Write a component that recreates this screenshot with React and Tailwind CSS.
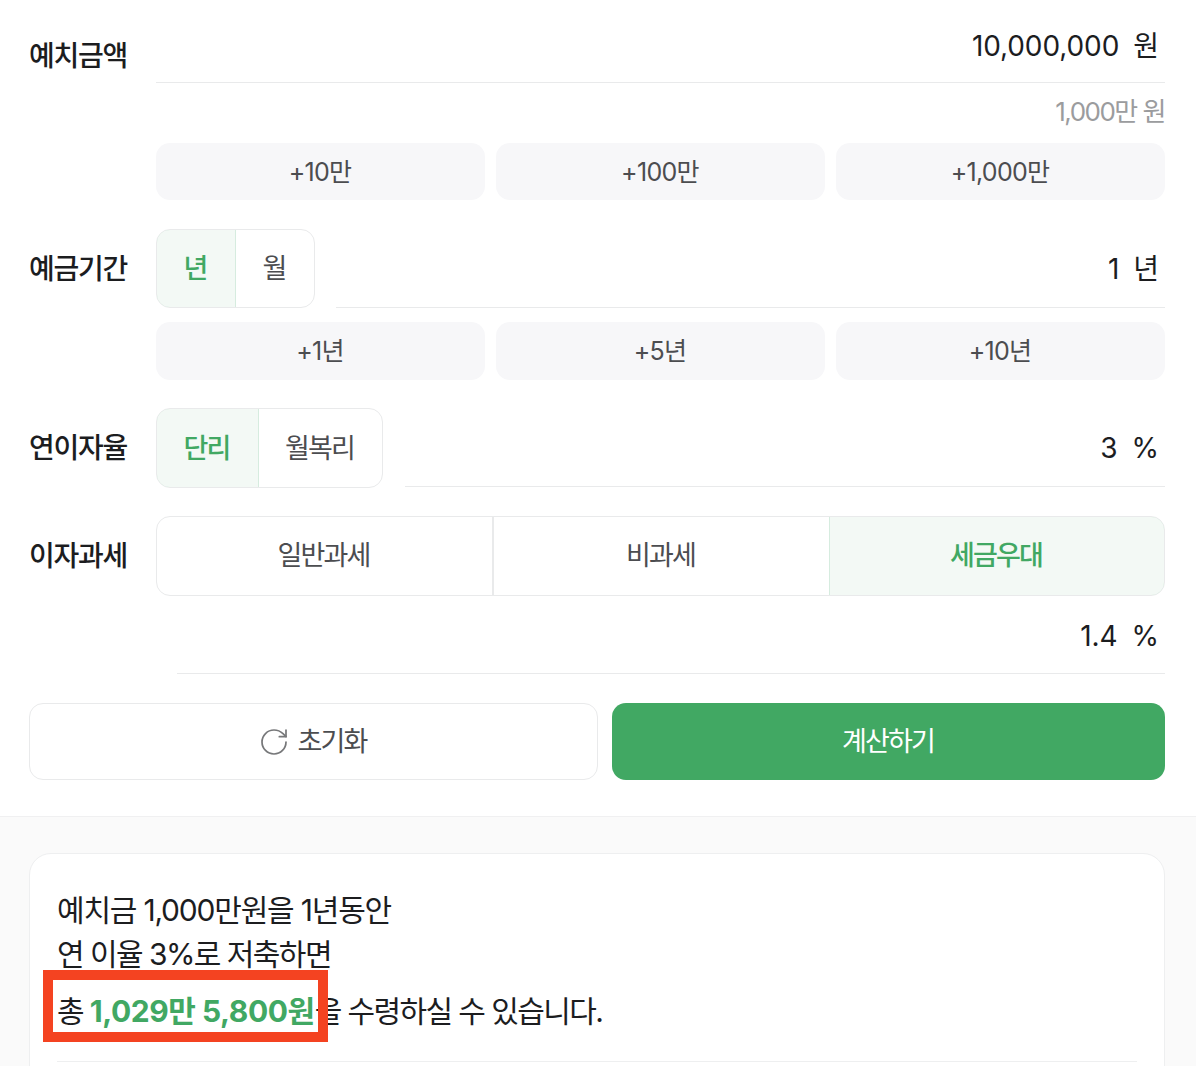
import React from "react";
import { RotateCw } from "lucide-react";

const Label = ({ children, className = "" }) => (
  <div className={`w-[127px] shrink-0 text-[28px] font-medium tracking-[-1.25px] text-[#1c1d1f] ${className}`}>{children}</div>
);

const Value = ({ value, unit, className = "" }) => (
  <div className={`flex items-center justify-end border-b border-[#e9eaeb] pr-[7px] text-[28px] text-[#1c1d1f] ${className}`}>
    <span className="relative top-[1px] tracking-[-0.1px]">{value}</span>
    <span className="relative top-[1px] ml-[14px] text-[28px] tracking-[-1px]">{unit}</span>
  </div>
);

const QuickButtons = ({ items, className = "" }) => (
  <div className={`grid grid-cols-3 gap-[11px] ${className}`}>
    {items.map((t) => (
      <div key={t} className="flex items-center justify-center rounded-[14px] bg-[#f7f7f9] pr-[1px] pt-[2px] text-[25px] tracking-[-0.7px] text-[#4c4d50]">{t}</div>
    ))}
  </div>
);

const Toggle = ({ first, second, firstW, w }) => (
  <div className={`flex h-full shrink-0 overflow-hidden rounded-[14px] border border-[#e9eaeb] ${w}`}>
    <div className={`-my-px -ml-px flex items-center justify-center rounded-l-[14px] border border-[#d6ecdf] bg-[#f3f9f5] pr-[2px] pt-[2px] text-[27px] font-medium tracking-[-1.8px] text-[#41a863] ${firstW}`}>{first}</div>
    <div className="flex flex-1 items-center justify-center pr-[2px] pt-[2px] text-[27px] tracking-[-1.8px] text-[#4c4d50]">{second}</div>
  </div>
);

export default function App() {
  return (
    <div className="h-[1066px] overflow-hidden bg-white font-['Inter','Noto_Sans_CJK_KR',sans-serif]">
      <div className="pl-[29px] pr-[31px]">
        <div className="flex">
          <Label className="pt-[38px] leading-[36px]">예치금액</Label>
          <div className="flex-1">
            <Value value="10,000,000" unit="원" className="h-[83px] pt-[8px]" />
            <div className="flex h-[60px] justify-end pt-[12px] text-[26px] leading-[34px] tracking-[-1.5px] text-[#9b9c9e]">1,000만 원</div>
            <QuickButtons items={["+10만", "+100만", "+1,000만"]} className="h-[57px]" />
          </div>
        </div>

        <div className="mt-[29px] flex">
          <Label className="pt-[22px] leading-[36px]">예금기간</Label>
          <div className="flex-1">
            <div className="flex h-[79px]">
              <Toggle first="년" second="월" firstW="w-[80px]" w="w-[159px]" />
              <Value value="1" unit="년" className="ml-[21px] flex-1" />
            </div>
            <QuickButtons items={["+1년", "+5년", "+10년"]} className="mt-[14px] h-[58px]" />
          </div>
        </div>

        <div className="mt-[28px] flex">
          <Label className="pt-[22px] leading-[36px]">연이자율</Label>
          <div className="flex h-[80px] flex-1">
            <Toggle first="단리" second="월복리" firstW="w-[103px]" w="w-[227px]" />
            <Value value="3" unit="%" className="mb-[1px] ml-[22px] flex-1" />
          </div>
        </div>

        <div className="mt-[28px] flex">
          <Label className="pt-[22px] leading-[36px]">이자과세</Label>
          <div className="flex h-[80px] flex-1 overflow-hidden rounded-[14px] border border-[#e9eaeb] text-[27px] tracking-[-1.9px]">
            <div className="flex w-[337px] items-center justify-center border-r-2 border-[#e9eaeb] pr-[2px] text-[#4c4d50]">일반과세</div>
            <div className="flex w-[335px] items-center justify-center pr-[2px] text-[#4c4d50]">비과세</div>
            <div className="-my-px -mr-px flex flex-1 items-center justify-center rounded-r-[14px] border border-[#d6ecdf] bg-[#f3f9f5] pr-[2px] font-medium text-[#41a863]">세금우대</div>
          </div>
        </div>

        <div className="pl-[148px]">
          <Value value="1.4" unit="%" className="h-[78px]" />
        </div>

        <div className="mt-[29px] flex h-[77px] gap-[14px]">
          <div className="flex w-[569px] items-center justify-center gap-[8px] rounded-[14px] border border-[#e9eaeb] pr-[3px] text-[27px] tracking-[-1.9px] text-[#4c4d50]">
            <RotateCw size={32} strokeWidth={1.3} className="text-[#77787a]" />
            <span className="pt-[1px]">초기화</span>
          </div>
          <div className="flex flex-1 items-center justify-center rounded-[14px] bg-[#41a863] pr-[1px] pt-[1px] text-[27px] font-normal tracking-[-1.9px] text-white">계산하기</div>
        </div>
      </div>

      <div className="relative mt-[36px] border-t border-[#f0f0f1] bg-[#fafafa] pl-[29px] pr-[31px] pt-[36px]">
        <div className="rounded-t-[22px] border border-[#eeeff0] bg-white px-[27px] pt-[34px] text-[30px] leading-[44px] text-[#1c1d1f]">
          <div className="tracking-[-1.2px]">예치금 1,000만원을 1년동안</div>
          <div className="tracking-[-1.55px]">연 이율 3%로 저축하면</div>
          <div className="mt-[13px] tracking-[-1.6px]">총 <span className="font-bold tracking-[-0.45px] text-[#41a863]">1,029만 5,800원</span>을 수령하실 수 있습니다.</div>
          <div className="mt-[28px] h-[200px] border-t border-[#eeeff0]"></div>
        </div>
        <div className="absolute left-[43px] top-[153px] h-[72px] w-[285px] border-[10px] border-[#f44321]"></div>
      </div>
    </div>
  );
}
